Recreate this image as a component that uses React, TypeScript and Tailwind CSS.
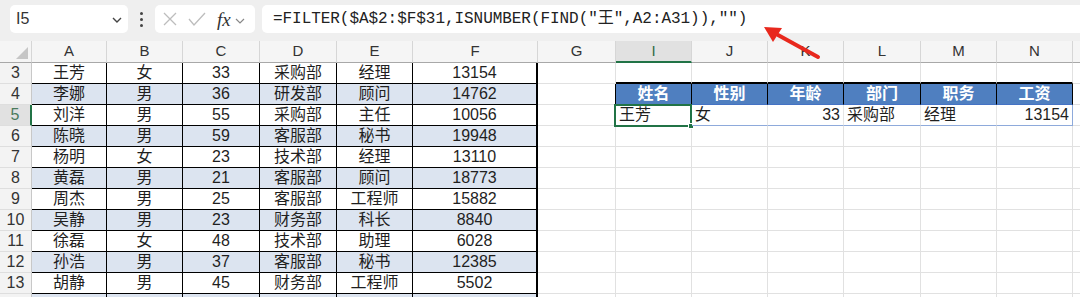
import React from 'react';

const W = [
  'w-[32px]',
  'w-[75px]',
  'w-[76px]',
  'w-[77px]',
  'w-[77px]',
  'w-[76px]',
  'w-[125px]',
  'w-[78px]',
  'w-[76px]',
  'w-[76px]',
  'w-[76px]',
  'w-[77px]',
  'w-[76px]',
  'w-[76px]',
];

const LETTERS = ['', 'A', 'B', 'C', 'D', 'E', 'F', 'G', 'I', 'J', 'K', 'L', 'M', 'N'];

const DATA: Array<[string, string, number, string, string, number]> = [
  ['王芳', '女', 33, '采购部', '经理', 13154],
  ['李娜', '男', 36, '研发部', '顾问', 14762],
  ['刘洋', '男', 55, '采购部', '主任', 10056],
  ['陈晓', '男', 59, '客服部', '秘书', 19948],
  ['杨明', '女', 23, '技术部', '经理', 13110],
  ['黄磊', '男', 21, '客服部', '顾问', 18773],
  ['周杰', '男', 25, '客服部', '工程师', 15882],
  ['吴静', '男', 23, '财务部', '科长', 8840],
  ['徐磊', '女', 48, '技术部', '助理', 6028],
  ['孙浩', '男', 37, '客服部', '秘书', 12385],
  ['胡静', '男', 45, '财务部', '工程师', 5502],
];

const HEAD = ['姓名', '性别', '年龄', '部门', '职务', '工资'];
const RESULT: Array<{ v: string; right?: boolean }> = [
  { v: '王芳' },
  { v: '女' },
  { v: '33', right: true },
  { v: '采购部' },
  { v: '经理' },
  { v: '13154', right: true },
];

const FONT = "font-['Liberation_Sans','Noto_Sans_CJK_SC',sans-serif]";

function Toolbar() {
  return (
    <div className="flex h-[41px] items-start bg-[#efefef] pt-[5px]">
      <div className="ml-[10px] flex h-[28px] w-[118px] items-center justify-between rounded-[5px] bg-white pl-[6px] pr-[4px]">
        <span className="text-[16px] text-[#333]">I5</span>
        <svg width="14" height="14" viewBox="0 0 14 14" className="mt-[2px]">
          <path d="M3 5l4 4 4-4" fill="none" stroke="#444" strokeWidth="1.4" />
        </svg>
      </div>
      <div className="flex h-[28px] w-[27px] flex-col items-center justify-center gap-[3px]">
        <span className="h-[3px] w-[3px] rounded-full bg-[#444]" />
        <span className="h-[3px] w-[3px] rounded-full bg-[#444]" />
        <span className="h-[3px] w-[3px] rounded-full bg-[#444]" />
      </div>
      <div className="flex h-[28px] w-[100px] items-center rounded-[5px] bg-white pl-[6px]">
        <svg width="18" height="18" viewBox="0 0 18 18">
          <path d="M3 3l12 12M15 3L3 15" fill="none" stroke="#bdbdbd" strokeWidth="1.3" />
        </svg>
        <svg width="20" height="18" viewBox="0 0 20 18" className="ml-[8px]">
          <path d="M2 9l5 6L18 3" fill="none" stroke="#bdbdbd" strokeWidth="1.3" />
        </svg>
        <span className="ml-[10px] font-['Liberation_Serif',serif] text-[19px] italic leading-none text-[#333]">
          fx
        </span>
        <svg width="12" height="12" viewBox="0 0 12 12" className="ml-[3px] mt-[3px]">
          <path d="M2 4l4 4 4-4" fill="none" stroke="#888" strokeWidth="1.2" />
        </svg>
      </div>
      <div className="ml-[7px] flex h-[28px] flex-1 items-center rounded-l-[5px] bg-white pl-[11px]">
        <span className="font-['Liberation_Mono','Noto_Sans_CJK_SC',monospace] text-[16px] tracking-[-0.05px] text-[#222]">
          =FILTER($A$2:$F$31,ISNUMBER(FIND("王",A2:A31)),"")
        </span>
      </div>
    </div>
  );
}

function HeaderRow() {
  return (
    <div className="flex h-[22px] bg-[#f5f5f5]">
      {LETTERS.map((l, i) => {
        const sel = i === 8;
        return (
          <div
            key={i}
            className={`${W[i]} relative flex shrink-0 items-center justify-center border-r border-r-[#d6d6d6] text-[15px] ${
              sel
                ? 'border-b-2 border-b-[#217346] bg-[#e1e1e1] text-[#2f6b45]'
                : 'border-b border-b-[#a8a8a8] text-[#333]'
            }`}
          >
            {i === 0 ? (
              <svg width="12" height="12" viewBox="0 0 12 12" className="absolute bottom-[3px] right-[3px]">
                <path d="M12 0V12H0Z" fill="#c6c6c6" />
              </svg>
            ) : (
              l
            )}
          </div>
        );
      })}
      <div className="flex-1 border-b border-b-[#a8a8a8]" />
    </div>
  );
}

function Row({ r }: { r: number }) {
  const d = DATA[r - 3];
  const blue = r % 2 === 0;
  const fill = blue ? 'bg-[#dce4f0]' : 'bg-white';
  const cells: React.ReactNode[] = [];

  // row number (row 14 only peeks in at the bottom edge)
  cells.push(
    <div
      key="n"
      className={`${W[0]} flex shrink-0 items-center justify-center border-b border-b-[#dedede] text-[16px] ${
        r === 5
          ? 'border-r-2 border-r-[#217346] bg-[#e1e1e1] text-[#4a7a5c]'
          : 'border-r border-r-[#c8c8c8] bg-[#f3f3f3] text-[#333]'
      }`}
    >
      {d ? r : ''}
    </div>
  );

  // A-F data table
  for (let c = 1; c <= 6; c++) {
    const val = d ? String(d[c - 1]) : '';
    cells.push(
      <div
        key={`d${c}`}
        className={`${W[c]} flex shrink-0 items-center justify-center border-b border-b-black text-[16px] text-[#1f1f1f] ${fill} ${
          c === 6 ? 'border-r-2 border-r-black' : 'border-r border-r-black'
        }`}
      >
        {val}
      </div>
    );
  }

  // G
  cells.push(
    <div
      key="g"
      className={`${W[7]} shrink-0 border-b border-b-[#e1e1e1] bg-white ${
        r === 4 ? 'border-r border-r-black' : r === 5 ? 'border-r border-r-[#8eaadb]' : 'border-r border-r-[#e1e1e1]'
      }`}
    />
  );

  // I-N
  for (let c = 8; c <= 13; c++) {
    const k = c - 8;
    if (r === 3) {
      cells.push(
        <div key={`r${c}`} className={`${W[c]} shrink-0 border-r border-b-2 border-r-[#e1e1e1] border-b-black bg-white`} />
      );
    } else if (r === 4) {
      cells.push(
        <div
          key={`r${c}`}
          className={`${W[c]} flex shrink-0 items-center justify-center border-r border-b border-r-black border-b-[#4472c4] bg-[#4f7fc0] text-[16px] font-bold text-white`}
        >
          {HEAD[k]}
        </div>
      );
    } else if (r === 5) {
      const cell = RESULT[k];
      cells.push(
        <div
          key={`r${c}`}
          className={`${W[c]} relative flex shrink-0 items-center border-b border-b-[#8eaadb] bg-white px-[3px] text-[16px] text-[#1f1f1f] ${
            cell.right ? 'justify-end' : 'justify-start'
          } ${c === 13 ? 'border-r border-r-[#8eaadb]' : 'border-r border-r-[#e6e6e6]'}`}
        >
          {cell.v}
          {c === 8 && (
            <div className="absolute -left-[2px] -top-[1px] h-[23px] w-[78px] border-2 border-[#217346]">
              <div className="absolute -bottom-[4px] -right-[4px] h-[6px] w-[6px] border border-white bg-[#217346]" />
            </div>
          )}
        </div>
      );
    } else {
      cells.push(
        <div key={`r${c}`} className={`${W[c]} shrink-0 border-r border-b border-r-[#e1e1e1] border-b-[#e1e1e1] bg-white`} />
      );
    }
  }

  cells.push(<div key="f" className="flex-1 border-b border-b-[#e1e1e1] bg-white" />);

  return <div className="flex h-[21px]">{cells}</div>;
}

export default function App() {
  const rows = [3, 4, 5, 6, 7, 8, 9, 10, 11, 12, 13, 14];
  return (
    <div className={`relative h-[297px] w-[1080px] overflow-hidden bg-white ${FONT}`}>
      <Toolbar />
      <HeaderRow />
      {rows.map((r) => (
        <Row key={r} r={r} />
      ))}
      <svg className="pointer-events-none absolute left-0 top-0" width="1080" height="297">
        <line x1="818" y1="57" x2="778" y2="35" stroke="#e8281d" strokeWidth="4" strokeLinecap="round" />
        <polygon points="764,27 782,28 773,42" fill="#e8281d" />
      </svg>
    </div>
  );
}
